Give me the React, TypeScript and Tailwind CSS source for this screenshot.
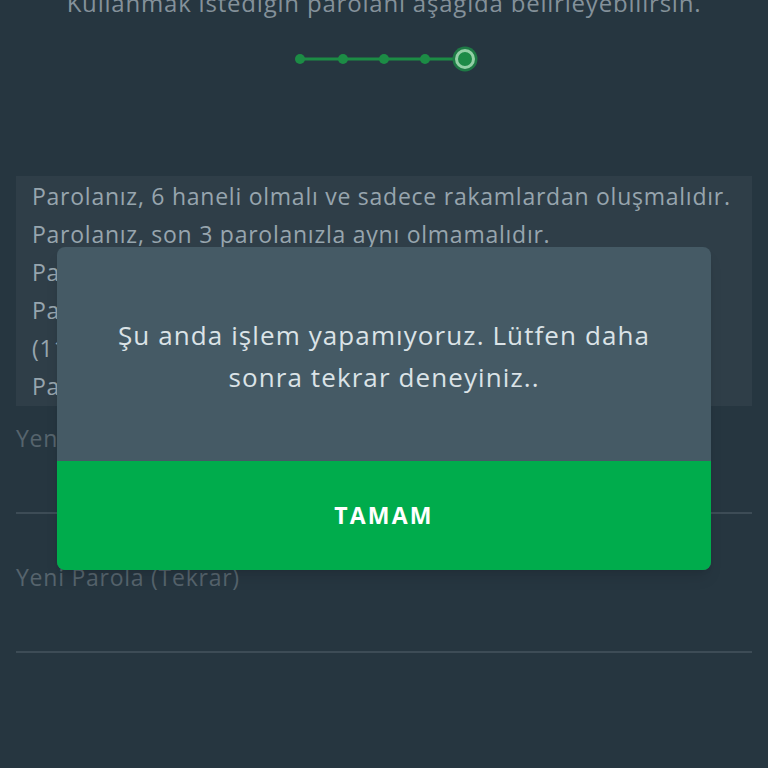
import React from "react";

const font = { fontFamily: "'Open Sans', Lato, sans-serif" };

const rules = [
  "Parolanız, 6 haneli olmalı ve sadece rakamlardan oluşmalıdır.",
  "Parolanız, son 3 parolanızla aynı olmamalıdır.",
  "Parolanız, ardışık rakamlardan oluşmamalıdır. (123456 gibi)",
  "Parolanız, tekrar eden rakamlardan oluşmamalıdır.",
  "(111111, 222222 gibi)",
  "Parolanız, doğum tarihinizi içermemelidir.",
];

function Stepper() {
  const dots = [300, 343, 384, 425];
  return (
    <svg width="768" height="30" viewBox="0 14 768 30" className="block">
      <line x1="300" y1="29" x2="462" y2="29" stroke="#1c8c45" strokeWidth="3" />
      {dots.map((x) => (
        <circle key={x} cx={x} cy="29" r="5" fill="#1c8c45" />
      ))}
      <circle cx="465" cy="29" r="12.5" fill="#1e7a45" />
      <circle cx="465" cy="29" r="8.5" fill="#1d8a47" stroke="#93cfa6" strokeWidth="3" />
    </svg>
  );
}

function Field({ label, top }: { label: string; top: string }) {
  return (
    <div className={`mx-4 border-b-2 border-[#3d4c56] ${top}`}>
      <div className="text-[23px] leading-[30px] tracking-[0.75px] text-[#56646d]">{label}</div>
    </div>
  );
}

export default function App() {
  return (
    <div className="relative w-[768px] h-[768px] overflow-hidden bg-[#263640]" style={font}>
      <div className="flex flex-col">
        <p className="-mt-[13px] text-center text-[24px] leading-[32px] tracking-[0.8px] text-[#84919a] whitespace-nowrap">
          Kullanmak istediğin parolanı aşağıda belirleyebilirsin.
        </p>
        <div className="mt-[25px]">
          <Stepper />
        </div>
        <div className="mx-4 mt-[102px] bg-[#2f3e48] px-4 py-px">
          {rules.map((r) => (
            <div key={r} className="text-[23px] leading-[38px] tracking-[0.75px] text-[#97a5ae] whitespace-nowrap">
              {r}
            </div>
          ))}
        </div>
        <Field label="Yeni Parola" top="pt-[17px] pb-[59px]" />
        <Field label="Yeni Parola (Tekrar)" top="pt-[48px] pb-[59px]" />
      </div>

      <div className="absolute left-[57px] top-[247px] w-[654px] overflow-hidden rounded-lg bg-[#455a65] shadow-lg">
        <div className="flex h-[214px] items-center justify-center pt-[3px]">
          <p className="text-center text-[26px] leading-[42px] tracking-[1.1px] text-[#dbe3e7] whitespace-nowrap">
            Şu anda işlem yapamıyoruz. Lütfen daha
            <br />
            sonra tekrar deneyiniz..
          </p>
        </div>
        <button className="flex h-[109px] w-full items-center justify-center bg-[#00ac4c] text-[23px] font-bold tracking-[2.2px] text-white">
          TAMAM
        </button>
      </div>
    </div>
  );
}
